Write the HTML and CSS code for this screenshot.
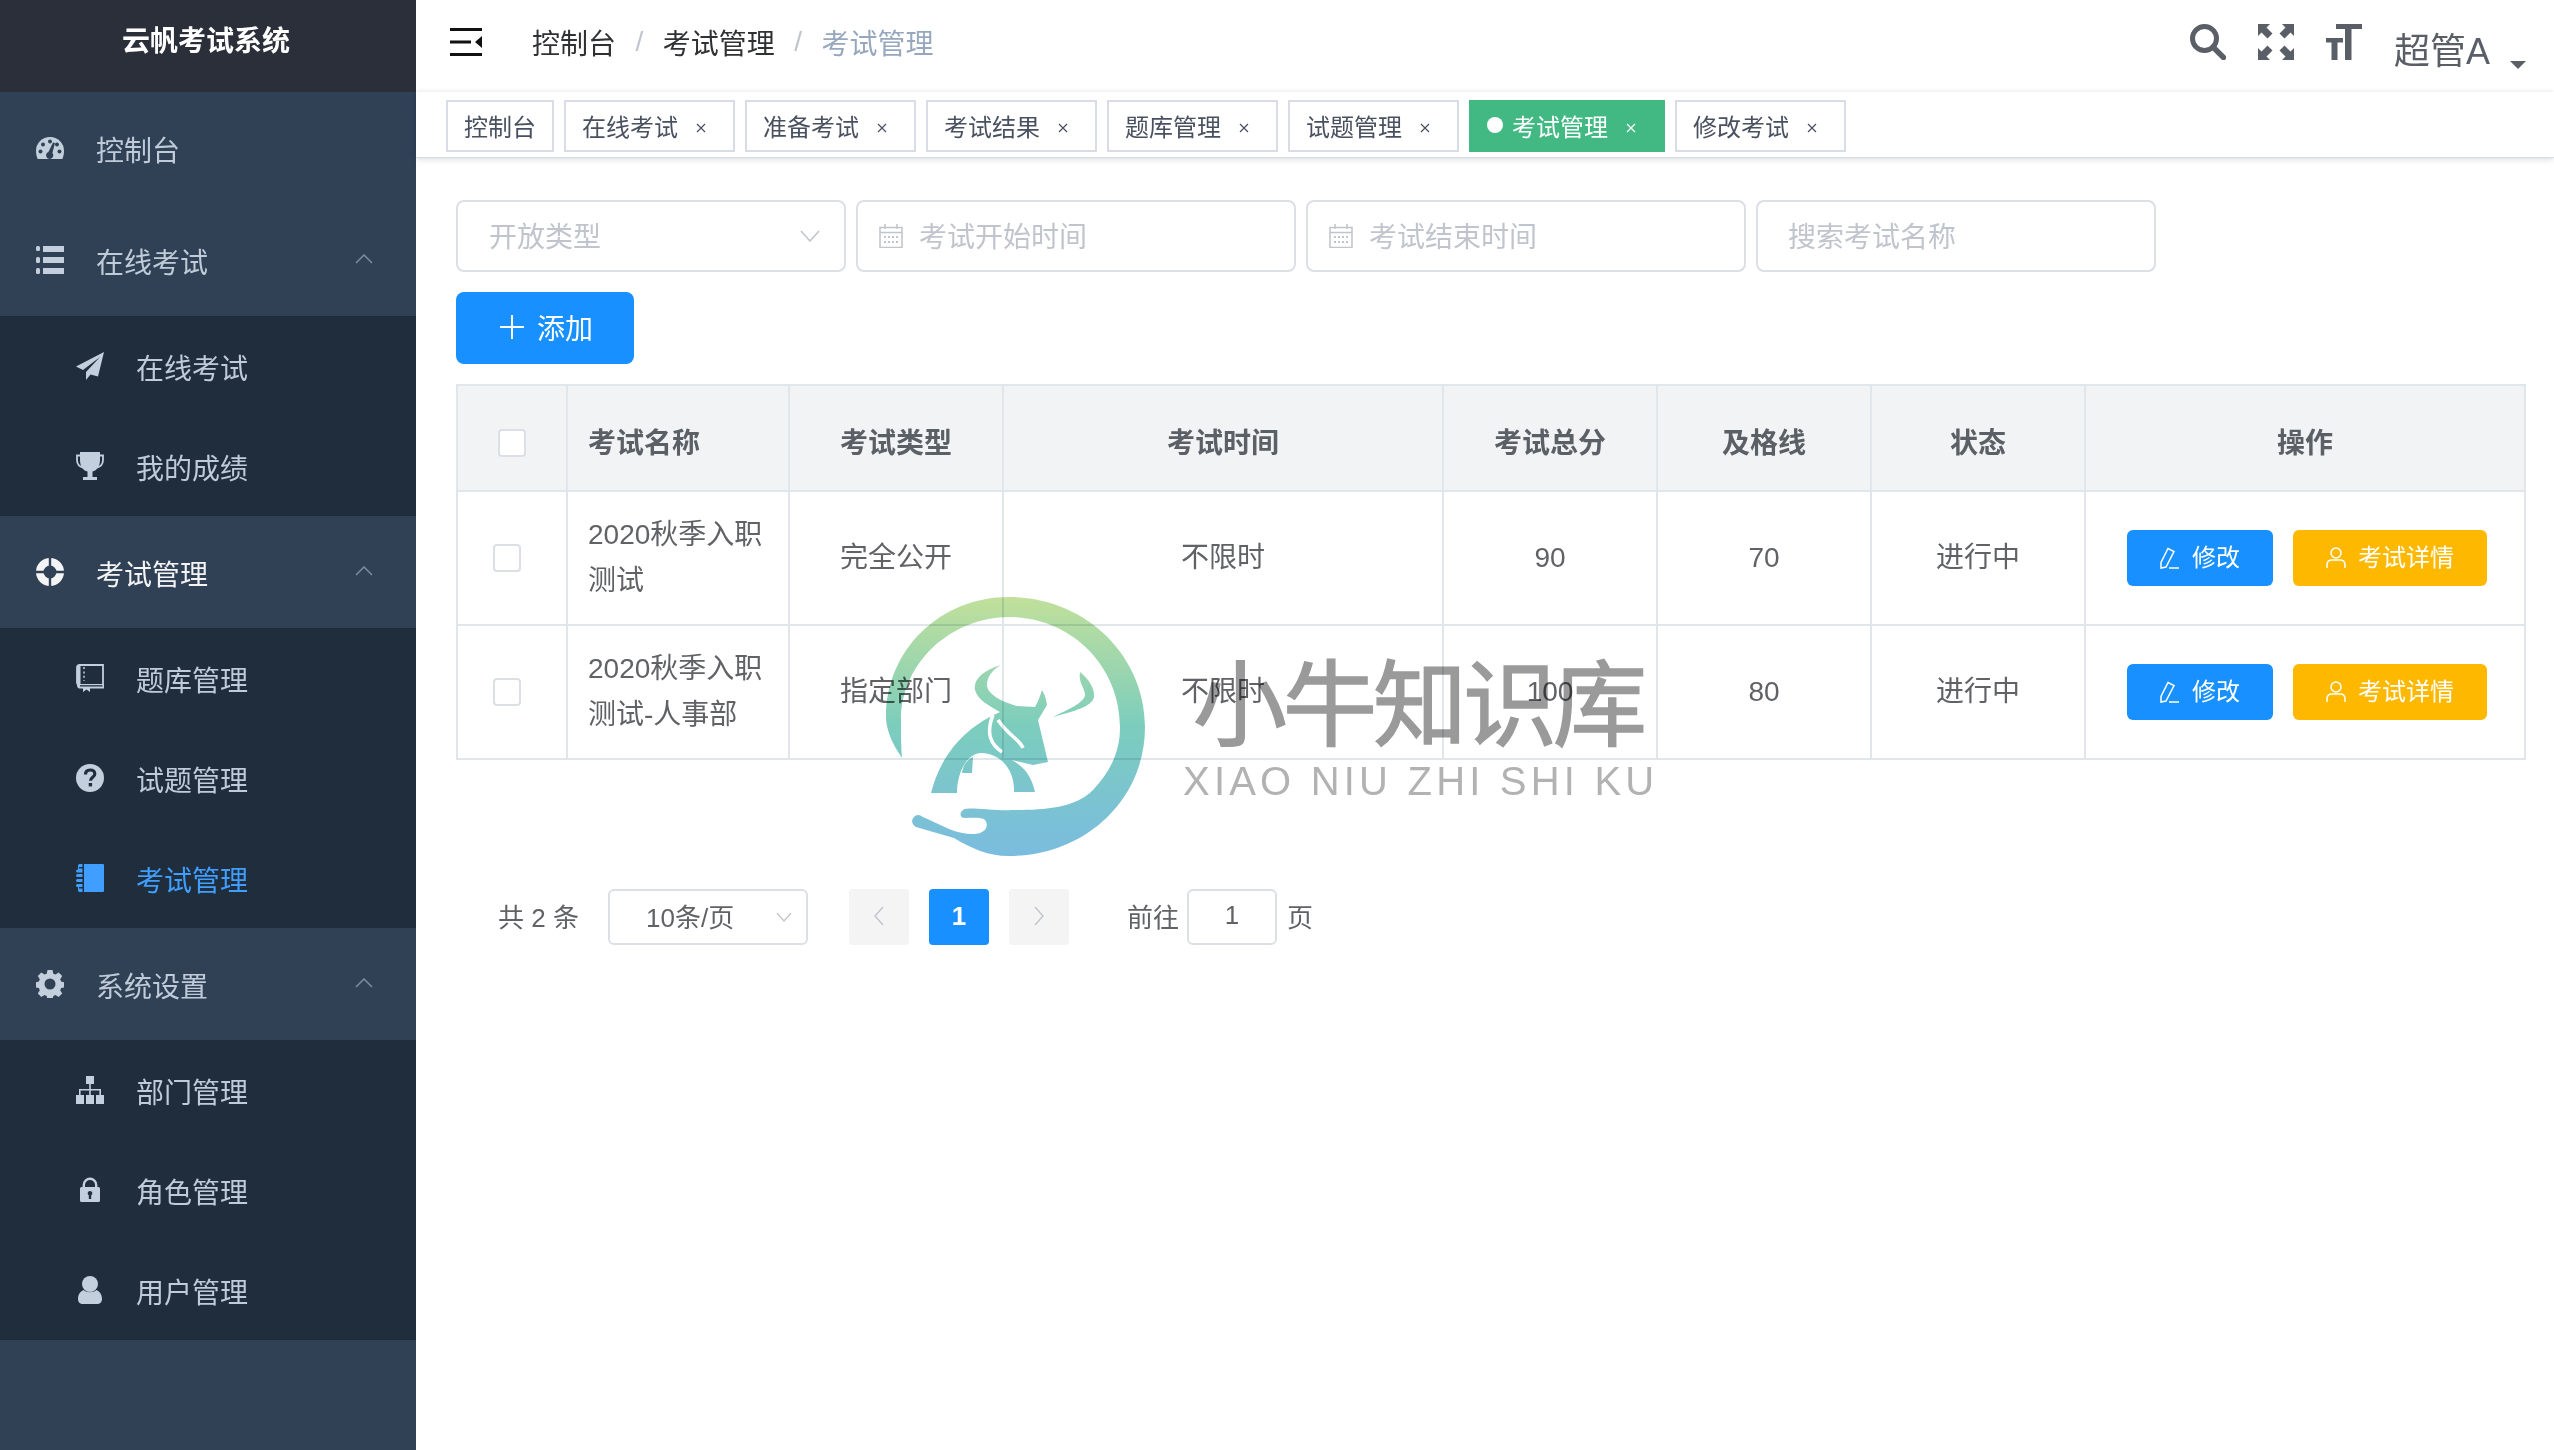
FILE: index.html
```html
<!DOCTYPE html>
<html lang="zh">
<head>
<meta charset="utf-8">
<title>云帆考试系统</title>
<link rel="stylesheet" href="styles.css">
</head>
<body>
<div class="app">
  <aside class="sidebar">
    <div class="brand">云帆考试系统</div>
    <nav class="menu">
      <a class="menu-title">
        <svg class="ico" viewBox="0 0 28 28"><path fill="currentColor" d="M14 3A14 14 0 0 0 0 17c0 3 .7 5.600 1.600 8h24.800c.9-2.400 1.600-5 1.600-8A14 14 0 0 0 14 3z"/><g fill="#304156"><circle cx="14" cy="7.500" r="2"/><circle cx="7" cy="10.500" r="2"/><circle cx="21" cy="10.500" r="2"/><circle cx="4.500" cy="17.500" r="2"/><circle cx="23.500" cy="17.500" r="2"/><path d="M17 8.500l2 .6-2.600 9.900a3.600 3.600 0 1 1-4-1z"/></g></svg>
        <span>控制台</span>
      </a>
      <a class="menu-title">
        <svg class="ico" viewBox="0 0 28 28"><g fill="currentColor"><rect x="0" y="0" width="4" height="5" rx="1.500"/><rect x="0" y="11" width="4" height="6" rx="1.500"/><rect x="0" y="22" width="4" height="6" rx="1.500"/><rect x="7" y="0" width="21" height="6"/><rect x="7" y="11" width="21" height="6"/><rect x="7" y="22" width="21" height="6"/></g></svg>
        <span>在线考试</span>
        <svg class="chev" viewBox="0 0 18 10"><path d="M1 9l8-8 8 8"/></svg>
      </a>
      <div class="sub">
        <a class="sub-item">
          <svg class="ico" viewBox="0 0 28 28"><path fill="currentColor" d="M28 0L0 14.500l7 3.500L24 5 10 20v8l4.500-5.500 7.500 2z"/></svg>
          <span>在线考试</span>
        </a>
        <a class="sub-item">
          <svg class="ico" viewBox="0 0 28 28"><path fill="currentColor" d="M4 0h20v8c0 6-3 10.500-7.500 11.500V25H21v3H7v-3h4.500v-5.500C7 18.500 4 14 4 8z"/><path fill="none" stroke="currentColor" stroke-width="1.800" d="M4 3.500H1V8c0 4 3 7 7 8M24 3.500h3V8c0 4-3 7-7 8"/></svg>
          <span>我的成绩</span>
        </a>
      </div>
      <a class="menu-title is-open">
        <svg class="ico" viewBox="0 0 28 28"><path fill="currentColor" fill-rule="evenodd" d="M14 0a14 14 0 1 1 0 28 14 14 0 0 1 0-28zm0 7.500a6.500 6.500 0 1 0 0 13 6.500 6.500 0 0 0 0-13z"/><path stroke="#304156" stroke-width="2.400" d="M14 0v8M14 20v8M0 14h8M20 14h8"/></svg>
        <span>考试管理</span>
        <svg class="chev" viewBox="0 0 18 10"><path d="M1 9l8-8 8 8"/></svg>
      </a>
      <div class="sub">
        <a class="sub-item">
          <svg class="ico" viewBox="0 0 28 28"><path fill="none" stroke="currentColor" stroke-width="1.800" d="M3.500 1H27v20H3.500C2 21 1 20 1 18.500V3.500C1 2 2 1 3.500 1z"/><rect x="1" y="1" width="3.500" height="20" fill="currentColor"/><path stroke="currentColor" stroke-width="1.500" stroke-dasharray="2 2.400" d="M8 3v14"/><path fill="currentColor" d="M1 20h27v4.500H14V28l-3.500-2.500L7 28v-3.500H3.500C2 24.500 1 23 1 21.500z"/><path fill="#1f2d3d" d="M4 21.200h22.500v1.300H4z"/></svg>
          <span>题库管理</span>
        </a>
        <a class="sub-item">
          <svg class="ico" viewBox="0 0 28 28"><circle cx="14" cy="14" r="14" fill="currentColor"/><path fill="none" stroke="#1f2d3d" stroke-width="3.200" d="M9.500 10.500c0-3 2-4.500 4.700-4.500 2.800 0 4.600 1.600 4.600 3.900 0 3.400-4.300 3.300-4.300 6.800"/><rect x="12.700" y="19" width="3.400" height="3.400" fill="#1f2d3d"/></svg>
          <span>试题管理</span>
        </a>
        <a class="sub-item is-active">
          <svg class="ico" viewBox="0 0 28 28"><path fill="currentColor" d="M8 0h19a1 1 0 0 1 1 1v26a1 1 0 0 1-1 1H8zM3 0h3.500v3H3v1.500h3.500v4H1.500a1.500 1.500 0 0 1 0-3H2V3a3 3 0 0 1 1-3zM1.500 10h5v3h-5a1.500 1.500 0 0 1 0-3zm0 5h5v3h-5a1.500 1.500 0 0 1 0-3zm0 5h5v3H3v1.500h3.500V28H3a3 3 0 0 1-1-3v-2h-.5a1.500 1.500 0 0 1 0-3z"/></svg>
          <span>考试管理</span>
        </a>
      </div>
      <a class="menu-title">
        <svg class="ico" viewBox="0 0 28 28"><path fill="currentColor" fill-rule="evenodd" d="M11.500 0h5l.8 3.700 2.200.9 3.200-2 3.500 3.500-2 3.200.9 2.200 3.700.8v5l-3.700.8-.9 2.200 2 3.200-3.500 3.500-3.200-2-2.200.9-.8 3.700h-5l-.8-3.700-2.200-.9-3.200 2-3.500-3.500 2-3.200-.9-2.200-3.700-.8v-5l3.700-.8.9-2.200-2-3.200 3.500-3.500 3.200 2 2.200-.9zM14 8.500a5.500 5.500 0 1 0 0 11 5.500 5.500 0 0 0 0-11z"/></svg>
        <span>系统设置</span>
        <svg class="chev" viewBox="0 0 18 10"><path d="M1 9l8-8 8 8"/></svg>
      </a>
      <div class="sub">
        <a class="sub-item">
          <svg class="ico" viewBox="0 0 28 28"><g fill="currentColor"><rect x="10" y="0" width="8" height="8"/><rect x="0" y="19" width="8" height="9"/><rect x="10" y="19" width="8" height="9"/><rect x="20" y="19" width="8" height="9"/><path d="M13.200 8h1.600v5H25v6h-1.600v-4.400h-8.600V19h-1.600v-4.400H4.600V19H3v-6h10.200z"/></g></svg>
          <span>部门管理</span>
        </a>
        <a class="sub-item">
          <svg class="ico" viewBox="0 0 28 28"><path fill="none" stroke="currentColor" stroke-width="2.400" d="M7.800 12V9a6.200 6.200 0 0 1 12.400 0v3"/><path fill="currentColor" fill-rule="evenodd" d="M5.500 11h17A1.500 1.500 0 0 1 24 12.500v12a1.500 1.500 0 0 1-1.500 1.500h-17A1.500 1.500 0 0 1 4 24.500v-12A1.500 1.500 0 0 1 5.500 11zM14 15a2.300 2.300 0 0 0-1.200 4.300V23h2.400v-3.700A2.300 2.300 0 0 0 14 15z"/></svg>
          <span>角色管理</span>
        </a>
        <a class="sub-item">
          <svg class="ico" viewBox="0 0 28 28"><circle cx="14" cy="8" r="8" fill="currentColor"/><path fill="currentColor" d="M7.500 14c3.500 3 9.500 3 13 0 3.500 1.500 5.500 5 5.500 9 0 3-2 5-5 5H7c-3 0-5-2-5-5 0-4 2-7.500 5.500-9z"/></svg>
          <span>用户管理</span>
        </a>
      </div>
    </nav>
  </aside>

  <main class="main">
    <header class="navbar">
      <svg class="hamburger" viewBox="0 0 32 28"><path fill="#111" d="M0 0h32v3H0zM0 12.500h21v3H0zM0 25h32v3H0zM32 8v12l-7-6z"/></svg>
      <div class="crumbs">
        <span class="crumb">控制台</span><span class="sep">/</span>
        <span class="crumb">考试管理</span><span class="sep">/</span>
        <span class="crumb is-last">考试管理</span>
      </div>
      <div class="tools">
        <svg class="tool" viewBox="0 0 36 36"><circle cx="14.500" cy="14.500" r="12" fill="none" stroke="#5a5e66" stroke-width="5"/><path d="M23 23l10.500 10.500" stroke="#5a5e66" stroke-width="5.500" stroke-linecap="round"/></svg>
        <svg class="tool" viewBox="0 0 36 36"><path fill="#5a5e66" d="M0 0h12L8.500 3.500l6 6-5 5-6-6L0 12zM36 0v12l-3.500-3.500-6 6-5-5 6-6L24 0zM0 36V24l3.500 3.500 6-6 5 5-6 6L12 36zM36 36H24l3.500-3.500-6-6 5-5 6 6L36 24z"/></svg>
        <svg class="tool tool-last" viewBox="0 0 36 36"><path fill="#5a5e66" d="M10 0h26v5H25.500v31h-6.500V5H10zM0 14h17v4.500h-5.500V36h-6V18.500H0z"/></svg>
        <div class="user"><span class="user-name">超管A</span><i class="caret"></i></div>
      </div>
    </header>

    <div class="tagsbar">
      <span class="tag">控制台</span>
      <span class="tag">在线考试<svg class="x" viewBox="0 0 10 10"><path d="M1 1l8 8M9 1l-8 8"/></svg></span>
      <span class="tag">准备考试<svg class="x" viewBox="0 0 10 10"><path d="M1 1l8 8M9 1l-8 8"/></svg></span>
      <span class="tag">考试结果<svg class="x" viewBox="0 0 10 10"><path d="M1 1l8 8M9 1l-8 8"/></svg></span>
      <span class="tag">题库管理<svg class="x" viewBox="0 0 10 10"><path d="M1 1l8 8M9 1l-8 8"/></svg></span>
      <span class="tag">试题管理<svg class="x" viewBox="0 0 10 10"><path d="M1 1l8 8M9 1l-8 8"/></svg></span>
      <span class="tag is-active"><i class="dot"></i>考试管理<svg class="x" viewBox="0 0 10 10"><path d="M1 1l8 8M9 1l-8 8"/></svg></span>
      <span class="tag">修改考试<svg class="x" viewBox="0 0 10 10"><path d="M1 1l8 8M9 1l-8 8"/></svg></span>
    </div>

    <section class="content">
      <div class="filters">
        <div class="field f-select"><span class="ph">开放类型</span><svg class="down" viewBox="0 0 20 12"><path d="M1 1l9 10 9-10"/></svg></div>
        <div class="field f-date"><svg class="cal" viewBox="0 0 24 24"><path fill="none" stroke="#c0c4cc" stroke-width="1.500" d="M1 3.500h22v20H1zM1 8.500h22M6 0v5M18 0v5"/><path stroke="#c0c4cc" stroke-width="2" stroke-dasharray="2 2" d="M5 13h15M5 18h15"/></svg><span class="ph">考试开始时间</span></div>
        <div class="field f-date"><svg class="cal" viewBox="0 0 24 24"><path fill="none" stroke="#c0c4cc" stroke-width="1.500" d="M1 3.500h22v20H1zM1 8.500h22M6 0v5M18 0v5"/><path stroke="#c0c4cc" stroke-width="2" stroke-dasharray="2 2" d="M5 13h15M5 18h15"/></svg><span class="ph">考试结束时间</span></div>
        <div class="field f-search"><span class="ph">搜索考试名称</span></div>
      </div>

      <button class="btn-add"><svg class="plus" viewBox="0 0 24 24"><path d="M12 0v24M0 12h24"/></svg><span>添加</span></button>

      <table class="grid">
        <colgroup>
          <col class="c-check"><col class="c-name"><col class="c-n"><col class="c-wide"><col class="c-n"><col class="c-n"><col class="c-n"><col class="c-wide">
        </colgroup>
        <thead>
          <tr>
            <th><i class="check check-head"></i></th>
            <th class="left">考试名称</th>
            <th>考试类型</th>
            <th>考试时间</th>
            <th>考试总分</th>
            <th>及格线</th>
            <th>状态</th>
            <th>操作</th>
          </tr>
        </thead>
        <tbody>
          <tr>
            <td><i class="check"></i></td>
            <td class="left">2020秋季入职测试</td>
            <td>完全公开</td>
            <td>不限时</td>
            <td>90</td>
            <td>70</td>
            <td>进行中</td>
            <td class="ops">
              <button class="op op-blue"><svg class="op-ico" viewBox="0 0 20 22"><path d="M8 1.500l6 3-8 15.500-5 1v-5.500zM9 21h10"/></svg>修改</button>
              <button class="op op-yellow"><svg class="op-ico" viewBox="0 0 20 22"><circle cx="10" cy="6" r="5"/><path d="M1 21v-3c0-3 2-5 5-5h8c3 0 5 2 5 5v3"/></svg>考试详情</button>
            </td>
          </tr>
          <tr>
            <td><i class="check"></i></td>
            <td class="left">2020秋季入职测试-人事部</td>
            <td>指定部门</td>
            <td>不限时</td>
            <td>100</td>
            <td>80</td>
            <td>进行中</td>
            <td class="ops">
              <button class="op op-blue"><svg class="op-ico" viewBox="0 0 20 22"><path d="M8 1.500l6 3-8 15.500-5 1v-5.500zM9 21h10"/></svg>修改</button>
              <button class="op op-yellow"><svg class="op-ico" viewBox="0 0 20 22"><circle cx="10" cy="6" r="5"/><path d="M1 21v-3c0-3 2-5 5-5h8c3 0 5 2 5 5v3"/></svg>考试详情</button>
            </td>
          </tr>
        </tbody>
      </table>

      <div class="pager">
        <span class="total">共 2 条</span>
        <div class="size"><span>10条/页</span><svg class="size-down" viewBox="0 0 16 10"><path d="M1 1l7 8 7-8"/></svg></div>
        <span class="pg"><svg class="pg-ico" viewBox="0 0 10 20"><path d="M9 1L1 10l8 9"/></svg></span>
        <span class="pg pg-on">1</span>
        <span class="pg"><svg class="pg-ico" viewBox="0 0 10 20"><path d="M1 1l8 9-8 9"/></svg></span>
        <span class="goto">前往</span>
        <span class="jump">1</span>
        <span class="page-word">页</span>
      </div>
    </section>

    <div class="watermark">
      <svg class="wm-logo" viewBox="0 0 270 270">
        <defs>
          <linearGradient id="wm" gradientUnits="userSpaceOnUse" x1="0" y1="7" x2="0" y2="266">
            <stop offset="0" stop-color="#c1e09b"/>
            <stop offset=".5" stop-color="#7ccdbd"/>
            <stop offset="1" stop-color="#7abcdf"/>
          </linearGradient>
        </defs>
        <path fill="url(#wm)" d="M22 168C11 152 6 138 6 127 6 60 60 7 129 7c76 0 136 58 136 130 0 73-60 129-136 129-22 0-38-8-55-18L36 237c-5-3-5-8-1-11 3-2 5-1 8 1l26 12c12 5 24 6 31 4 6-2 9-8 5-13-3-3-12-2-20-2-6 0-6-7 0-9 5-2 30 2 50 1C165 220 195 218 213 200 232 180 240 160 240 137 240 75 190 27 129 27 72 27 21 72 21 130 21 145 21 155 22 168z"/>
        <path fill="url(#wm)" d="M121 75C103 80 93 90 95 100 98 110 108 115 120 122 90 135 62 160 51 203H77C77 185 85 165 100 163 118 162 135 178 134 202H155C152 188 146 178 132 170L153 175 168 172 158 130 167 115C166 108 164 103 162 100 160 106 158 112 155 117L137 116C122 112 107 104 107 95 107 87 112 80 121 75z"/>
        <path fill="none" stroke="#fff" stroke-width="3.500" d="M113 125C105 145 112 155 122 162M118 130C128 145 140 150 143 158"/>
        <path fill="url(#wm)" d="M82 183C83 175 87 170 93 167L92 183z"/>
        <path fill="url(#wm)" d="M200 82c10 8 15 18 14 25-2 10-20 14-41 20 14-7 31-14 32-22 0-7-7-12-5-23z"/>
      </svg>
      <div class="wm-text">
        <div class="wm-cn">小牛知识库</div>
        <div class="wm-en">XIAO NIU ZHI SHI KU</div>
      </div>
    </div>
  </main>
</div>
</body>
</html>
```
FILE: styles.css
```css
* { box-sizing: border-box; }
html, body { margin: 0; padding: 0; height: 100%; }
body {
  font-family: "Liberation Sans", "Noto Sans CJK SC", sans-serif;
  color: #606266;
  background: #fff;
  overflow: hidden;
}
.app { display: flex; height: 1450px; }

/* sidebar */
.sidebar { width: 416px; flex: none; background: #304156; color: #bfcbd9; }
.brand {
  height: 92px;
  padding-right: 4px;
  background: #2b2f3a;
  color: #fff;
  font-size: 28px;
  font-weight: 700;
  line-height: 84px;
  text-align: center;
}
.menu-title, .sub-item { display: flex; align-items: center; font-size: 28px; color: #bfcbd9; }
.menu-title { height: 112px; padding-left: 36px; }
.sub { background: #1f2d3d; }
.sub-item { height: 100px; padding-left: 76px; }
.ico { width: 28px; height: 28px; margin-right: 32px; flex: none; color: #c3cfdc; }
.menu-title span, .sub-item span { line-height: 40px; margin-top: 8px; }
.menu-title.is-open, .menu-title.is-open .ico { color: #f4f4f5; }
.sub-item.is-active, .sub-item.is-active .ico { color: #409eff; }
.chev {
  width: 18px; height: 10px; margin-left: auto; margin-right: 43px; margin-top: -2px;
  fill: none; stroke: #7f8c9b; stroke-width: 1.500;
}

/* main */
.main { position: relative; flex: 1; min-width: 0; }
.navbar {
  height: 92px;
  display: flex;
  align-items: center;
  padding-left: 34px;
  position: relative;
}
.hamburger { width: 32px; height: 28px; margin-top: -8px; flex: none; }
.crumbs { display: flex; align-items: center; margin-left: 50px; margin-top: -8px; font-size: 28px; color: #303133; }
.sep { margin: 0 19.500px; color: #c0c4cc; }
.crumb.is-last { color: #97a8be; }
.tools { margin-left: auto; display: flex; align-items: flex-start; height: 92px; padding-top: 24px; padding-right: 28px; }
.tool { width: 36px; height: 36px; margin-right: 32px; flex: none; }
.tool-last { margin-right: 32px; }
.user { display: flex; align-items: flex-start; }
.user-name { font-size: 36px; line-height: 56px; color: #5a5e66; }
.caret {
  width: 0; height: 0; margin: 37px 0 0 20px;
  border-left: 8px solid transparent; border-right: 8px solid transparent; border-top: 8px solid #5a5e66;
}

.tagsbar {
  height: 66px;
  padding: 8px 0 0 30px;
  display: flex;
  gap: 10px;
  background: #fff;
  border-bottom: 1px solid #d8dce5;
  box-shadow: 0 2px 6px rgba(0, 21, 41, .12), 0 -1px 4px rgba(0, 21, 41, .05);
  position: relative;
}
.tag {
  height: 52px;
  padding: 0 16px 2px;
  display: inline-flex;
  align-items: center;
  border: 2px solid #d8dce5;
  font-size: 24px;
  color: #495060;
  background: #fff;
}
.tag.is-active { background: #42b983; border-color: #42b983; color: #fff; }
.dot { width: 16px; height: 16px; margin-right: 9px; border-radius: 50%; background: #fff; }
.x { width: 10px; height: 10px; margin: 6px 11px 0 18px; fill: none; stroke: currentColor; stroke-width: 1.200; }

/* content */
.content { padding: 42px 29px 0 40px; }
.filters { display: flex; gap: 10px; }
.field {
  height: 72px;
  display: flex;
  align-items: center;
  border: 2px solid #dcdfe6;
  border-radius: 8px;
  background: #fff;
}
.f-select { width: 390px; padding: 0 24px 0 31px; justify-content: space-between; }
.f-date { width: 440px; padding-left: 21px; }
.f-search { width: 400px; padding-left: 30px; }
.ph { font-size: 28px; color: #c0c4cc; padding-bottom: 3px; }
.down { width: 20px; height: 12px; fill: none; stroke: #c0c4cc; stroke-width: 1.500; }
.cal { width: 24px; height: 24px; margin-right: 16px; flex: none; }

.btn-add {
  width: 178px; height: 72px; margin-top: 20px; padding: 0 0 2px 44px;
  display: flex; align-items: center;
  border: 0; border-radius: 8px;
  background: #1890ff; color: #fff;
  font: inherit; font-size: 28px;
}
.plus { width: 24px; height: 24px; margin-right: 13px; fill: none; stroke: #fff; stroke-width: 2; }

.grid {
  width: 2068px;
  margin-top: 20px;
  table-layout: fixed;
  border-collapse: collapse;
  font-size: 28px;
  color: #606266;
}
.c-check { width: 110px; }
.c-name { width: 222px; }
.c-n { width: 214px; }
.c-wide { width: 440px; }
.grid th, .grid td { border: 2px solid #dfe6ec; text-align: center; padding: 0 22px; line-height: 46px; }
.grid th { height: 106px; padding-top: 12px; background: #f1f3f5; font-weight: 700; color: #5b6066; }
.grid td { height: 134px; }
.grid .left { text-align: left; padding-left: 20px; padding-right: 20px; }
.check {
  display: block; width: 28px; height: 28px; margin-left: -3px; margin-right: auto;
  border: 2px solid #dcdfe6; border-radius: 4px; background: #fff;
}
.grid td:first-child, .grid th:first-child { padding-left: 38px; padding-right: 0; }
.check-head { margin-left: 2px; margin-top: -2px; }
.grid .ops { white-space: nowrap; font-size: 0; padding-left: 24px; padding-right: 20px; }
.op {
  display: inline-flex; align-items: center; justify-content: center;
  height: 56px; padding: 0; border: 0; border-radius: 6px; color: #fff;
  font: inherit; font-size: 24px; vertical-align: middle;
}
.op-blue { width: 146px; background: #1890ff; }
.op-yellow { width: 194px; margin-left: 20px; background: #ffb800; }
.op-ico { width: 20px; height: 22px; margin-right: 12px; fill: none; stroke: #fff; stroke-width: 1.500; }

/* pager */
.pager { display: flex; align-items: center; height: 56px; margin-top: 129px; padding-left: 42px; font-size: 26px; color: #606266; }
.total { width: 110px; padding-bottom: 4px; }
.size {
  width: 200px; height: 56px; padding: 0 14px 4px 36px;
  display: flex; align-items: center; justify-content: space-between;
  border: 2px solid #dcdfe6; border-radius: 6px;
}
.size-down { width: 16px; height: 10px; margin-top: 4px; fill: none; stroke: #c0c4cc; stroke-width: 1.200; }
.pg {
  width: 60px; height: 56px; margin-left: 20px; padding-bottom: 2px;
  display: flex; align-items: center; justify-content: center;
  background: #f4f4f5; border-radius: 4px;
  font-weight: 700; color: #fff; font-size: 26px;
}
.size + .pg { margin-left: 41px; }
.pg-on { background: #1890ff; }
.pg-ico { width: 10px; height: 20px; fill: none; stroke: #c0c4cc; stroke-width: 1.400; }
.goto { margin-left: 58px; padding-bottom: 4px; }
.jump {
  width: 90px; height: 56px; margin-left: 8px; padding-bottom: 4px;
  display: flex; align-items: center; justify-content: center;
  border: 2px solid #dcdfe6; border-radius: 6px;
}
.page-word { margin-left: 10px; padding-bottom: 4px; }

/* watermark overlay */
.watermark {
  position: absolute;
  left: 464px;
  top: 590px;
  display: flex;
  mix-blend-mode: multiply;
  pointer-events: none;
}
.wm-logo { width: 270px; height: 270px; flex: none; }
.wm-text { margin-left: 35px; }
.wm-cn {
  margin-top: 47px; margin-left: 8px;
  font-family: "Noto Sans CJK SC", sans-serif;
  font-size: 94px; line-height: 122px; letter-spacing: -4px;
  color: #9a9a9a; white-space: nowrap;
  -webkit-text-stroke: 1.500px #9a9a9a;
}
.wm-en {
  margin-top: 4px; margin-left: -2px;
  font-family: "Liberation Sans", sans-serif;
  font-size: 40px; line-height: 36px; letter-spacing: 4.200px;
  color: #b2b2b2; white-space: nowrap;
}
```
